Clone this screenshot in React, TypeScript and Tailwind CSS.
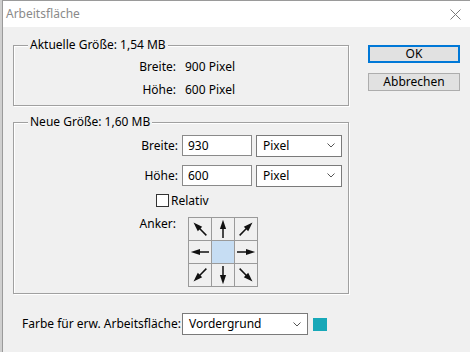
const BODY = '#f0f0f0'

function Arrow({ angle }: { angle: number }) {
  return (
    <svg width="22" height="22" viewBox="0 0 22 22">
      <g transform={`rotate(${angle} 11 11)`}>
        <line x1="11" y1="20" x2="11" y2="9" stroke="#111" strokeWidth="1.5" />
        <polygon points="11,1.8 7.9,11 14.1,11" fill="#111" />
      </g>
    </svg>
  )
}

function Chevron() {
  return (
    <svg width="8" height="5" viewBox="0 0 8 5" className="shrink-0">
      <polyline points="0.5,0.5 4,4 7.5,0.5" fill="none" stroke="#555" strokeWidth="1" />
    </svg>
  )
}

function Select({ value, className }: { value: string; className: string }) {
  return (
    <div
      className={`flex items-center justify-between bg-white border border-[#7a7a7a] pl-[6px] pr-[6px] ${className}`}
    >
      <span>{value}</span>
      <Chevron />
    </div>
  )
}

const anchors: (number | null)[] = [-45, 0, 45, -90, null, 90, -135, 180, 135]

export default function App() {
  return (
    <div className="w-[470px] h-[352px] flex overflow-hidden font-['Noto_Sans',sans-serif] text-[12px] leading-[16px] text-black bg-[#d4d4d4]">
      {/* sliver of the window behind */}
      <div className="w-[2px] shrink-0 bg-[#cfcfcf]" />

      <div className="flex-1 flex flex-col border-l border-t border-[#9a9a9a] bg-[#f0f0f0]">
        {/* Title bar */}
        <div className="h-[26px] bg-white flex items-center justify-between pl-[3px] pr-[9px]">
          <span className="text-[#8a8a8a] text-[12px]">Arbeitsfläche</span>
          <svg width="11" height="11" viewBox="0 0 11 11">
            <path d="M0.5 0.5 L10.5 10.5 M10.5 0.5 L0.5 10.5" stroke="#7a7a7a" strokeWidth="1" />
          </svg>
        </div>

        <div className="flex">
          {/* Left column */}
          <div className="w-[347px] pl-[10px] pt-[10px]">
            <fieldset className="h-[69px] w-[336px] border border-[#a0a0a0] shadow-[1px_1px_0_#fff,inset_1px_1px_0_#fff]">
              <legend className="ml-[14px] px-[2px] bg-[#f0f0f0]">Aktuelle Größe: 1,54 MB</legend>
              <div className="flex flex-col gap-[7px] pt-[6px]">
                <div className="flex h-[16px]">
                  <span className="w-[162px] text-right">Breite:</span>
                  <span className="ml-[9px]">900 Pixel</span>
                </div>
                <div className="flex h-[16px]">
                  <span className="w-[162px] text-right">Höhe:</span>
                  <span className="ml-[9px]">600 Pixel</span>
                </div>
              </div>
            </fieldset>

            <fieldset className="mt-[8px] h-[180px] w-[336px] border border-[#a0a0a0] shadow-[1px_1px_0_#fff,inset_1px_1px_0_#fff]">
              <legend className="ml-[14px] px-[2px] bg-[#f0f0f0]">Neue Größe: 1,60 MB</legend>
              <div className="flex flex-col pt-[5px]">
                <div className="flex items-center h-[21px]">
                  <span className="w-[164px] text-right">Breite:</span>
                  <div className="ml-[4px] w-[70px] h-[21px] bg-white border border-[#8a8a8a] pl-[5px] flex items-center">930</div>
                  <Select value="Pixel" className="ml-[4px] w-[86px] h-[22px]" />
                </div>
                <div className="flex items-center h-[21px] mt-[9px]">
                  <span className="w-[164px] text-right">Höhe:</span>
                  <div className="ml-[4px] w-[70px] h-[21px] bg-white border border-[#8a8a8a] pl-[5px] flex items-center">600</div>
                  <Select value="Pixel" className="ml-[4px] w-[86px] h-[22px]" />
                </div>
                <div className="flex items-center h-[13px] mt-[8px] ml-[142px]">
                  <div className="w-[13px] h-[13px] bg-white border border-[#333]" />
                  <span className="ml-[2px]">Relativ</span>
                </div>
                <div className="flex mt-[10px]">
                  <span className="w-[162px] text-right -mt-[1px]">Anker:</span>
                  <div className="ml-[12px] grid grid-cols-[22px_22px_22px] gap-px p-px bg-[#9a9a9a]">
                    {anchors.map((a, i) => (
                      <div key={i} className={a === null ? 'w-[22px] h-[22px] bg-[#c6ddf3]' : 'w-[22px] h-[22px] bg-[#f0f0f0]'}>
                        {a !== null && <Arrow angle={a} />}
                      </div>
                    ))}
                  </div>
                </div>
              </div>
            </fieldset>

            <div className="flex items-center mt-[19px] ml-[9px]">
              <span className="w-[156px] whitespace-nowrap">Farbe für erw. Arbeitsfläche:</span>
              <Select value="Vordergrund" className="ml-[4px] w-[126px] h-[22px]" />
              <div className="ml-[5px] w-[14px] h-[13px] bg-[#17a8b8]" />
            </div>
          </div>

          {/* Right column: buttons */}
          <div className="ml-[18px] pt-[18px] w-[92px] flex flex-col gap-[10px]">
            <button className="h-[18px] w-[92px] bg-[#e1e1e1] border-2 border-[#0078d7] flex items-center justify-center leading-none">
              OK
            </button>
            <button className="h-[18px] w-[92px] bg-[#e1e1e1] border border-[#adadad] flex items-center justify-center leading-none">
              Abbrechen
            </button>
          </div>
        </div>
      </div>
    </div>
  )
}
